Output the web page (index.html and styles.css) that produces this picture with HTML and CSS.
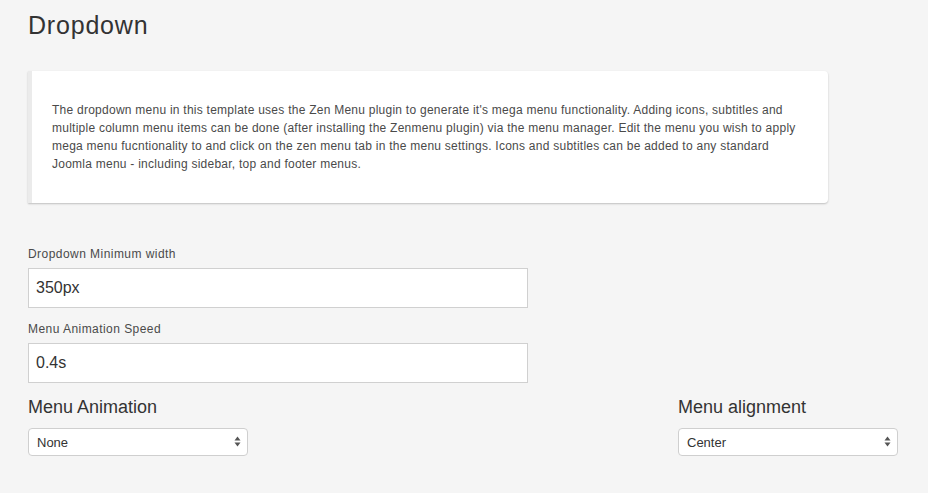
FILE: index.html
```html
<!DOCTYPE html>
<html>
<head>
<meta charset="utf-8">
<link rel="stylesheet" href="styles.css">
</head>
<body>
<div class="page">
  <h1 class="title">Dropdown</h1>
  <div class="card">
    <p class="card-text">The dropdown menu in this template uses the Zen Menu plugin to generate it's mega menu functionality. Adding icons, subtitles and multiple column menu items can be done (after installing the Zenmenu plugin) via the menu manager. Edit the menu you wish to apply mega menu fucntionality to and click on the zen menu tab in the menu settings. Icons and subtitles can be added to any standard Joomla menu - including sidebar, top and footer menus.</p>
  </div>

  <div class="field first">
    <label class="label">Dropdown Minimum width</label>
    <input class="input" type="text" value="350px">
  </div>
  <div class="field">
    <label class="label">Menu Animation Speed</label>
    <input class="input" type="text" value="0.4s">
  </div>

  <div class="row">
    <div class="group">
      <h3 class="group-title">Menu Animation</h3>
      <div class="select-wrap">
        <select class="select"><option>None</option></select>
        <svg class="arrows" width="7" height="11" viewBox="0 0 7 11"><path d="M3.5 0.5 L6.5 4.5 L0.5 4.5 Z M3.5 10.5 L6.5 6.5 L0.5 6.5 Z" fill="#555"/></svg>
      </div>
    </div>
    <div class="group">
      <h3 class="group-title">Menu alignment</h3>
      <div class="select-wrap">
        <select class="select"><option>Center</option></select>
        <svg class="arrows" width="7" height="11" viewBox="0 0 7 11"><path d="M3.5 0.5 L6.5 4.5 L0.5 4.5 Z M3.5 10.5 L6.5 6.5 L0.5 6.5 Z" fill="#555"/></svg>
      </div>
    </div>
  </div>
</div>
</body>
</html>
```

FILE: styles.css
```css
html, body {
  margin: 0;
  padding: 0;
  background: #f5f5f5;
}
body {
  font-family: "Liberation Sans", Arial, Helvetica, sans-serif;
  color: #333;
}
.page {
  padding: 0 30px 0 28px;
}
.title {
  margin: 10px 0 0;
  font-size: 25px;
  line-height: 30px;
  letter-spacing: 0.8px;
  font-weight: normal;
  color: #333;
}
.card {
  margin-top: 31px;
  width: 800px;
  box-sizing: border-box;
  background: #fff;
  border-left: 4px solid #ebebeb;
  border-radius: 0 4px 4px 0;
  box-shadow: 0 1px 2px rgba(0,0,0,0.22);
  padding: 30px 20px 30px 20px;
}
.card-text {
  margin: 0;
  font-size: 12px;
  line-height: 18px;
  letter-spacing: 0.25px;
  color: #4a4a4a;
}
.field {
  margin-top: 12px;
}
.field.first {
  margin-top: 42px;
}
.label {
  display: block;
  font-size: 12px;
  line-height: 18px;
  letter-spacing: 0.45px;
  color: #4a4a4a;
  margin-bottom: 5px;
}
.input {
  display: block;
  width: 500px;
  height: 40px;
  box-sizing: border-box;
  border: 1px solid #d0d0d0;
  border-radius: 0;
  background: #fff;
  padding: 0 7px;
  font-family: "Liberation Sans", Arial, Helvetica, sans-serif;
  font-size: 16px;
  color: #333;
  margin: 0;
}
.row {
  display: flex;
  justify-content: space-between;
  margin-top: 13px;
}
.group {
  width: 220px;
}
.group-title {
  margin: 0 0 10px;
  font-size: 18px;
  line-height: 22px;
  font-weight: normal;
  color: #333;
}
.select-wrap {
  position: relative;
  width: 220px;
  height: 28px;
}
.select {
  display: block;
  -webkit-appearance: none;
  appearance: none;
  width: 220px;
  height: 28px;
  box-sizing: border-box;
  border: 1px solid #cfcfcf;
  border-radius: 4px;
  background: #fff;
  padding: 0 8px;
  font-family: "Liberation Sans", Arial, Helvetica, sans-serif;
  font-size: 13px;
  color: #333;
  margin: 0;
}
.arrows {
  position: absolute;
  right: 7px;
  top: 8px;
  pointer-events: none;
}
```
